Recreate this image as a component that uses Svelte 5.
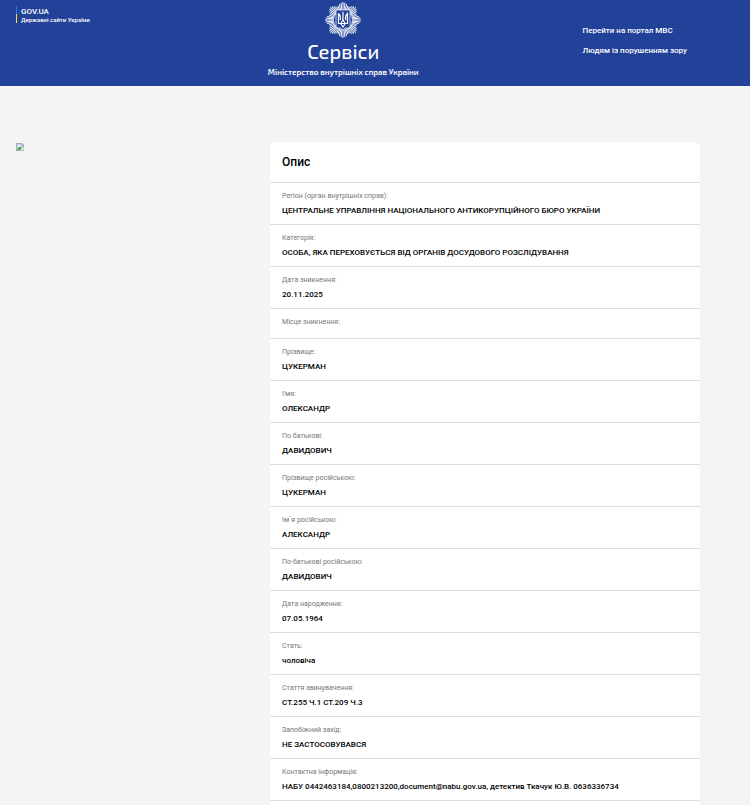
<script>
	const fields = [
		{ label: "Регіон (орган внутрішніх справ):", value: "ЦЕНТРАЛЬНЕ УПРАВЛІННЯ НАЦІОНАЛЬНОГО АНТИКОРУПЦІЙНОГО БЮРО УКРАЇНИ" },
		{ label: "Категорія:", value: "ОСОБА, ЯКА ПЕРЕХОВУЄТЬСЯ ВІД ОРГАНІВ ДОСУДОВОГО РОЗСЛІДУВАННЯ" },
		{ label: "Дата зникнення:", value: "20.11.2025" },
		{ label: "Місце зникнення:", value: "" },
		{ label: "Прізвище:", value: "ЦУКЕРМАН" },
		{ label: "І'мя:", value: "ОЛЕКСАНДР" },
		{ label: "По батькові:", value: "ДАВИДОВИЧ" },
		{ label: "Прізвище російською:", value: "ЦУКЕРМАН" },
		{ label: "Ім`я російською:", value: "АЛЕКСАНДР" },
		{ label: "По-батькові російською:", value: "ДАВИДОВИЧ" },
		{ label: "Дата народження:", value: "07.05.1964" },
		{ label: "Стать:", value: "чоловіча" },
		{ label: "Стаття звинувачення:", value: "СТ.255 Ч.1 СТ.209 Ч.3" },
		{ label: "Запобіжний захід:", value: "НЕ ЗАСТОСОВУВАВСЯ" },
		{ label: "Контактна інформація:", value: "НАБУ 0442463184,0800213200,document@nabu.gov.ua, детектив Ткачук Ю.В. 0636336734" }
	];

	// the star: eight beams of seven rays, the middle ray is the longest
	const lengths = [18, 17.4, 16.2, 14.8, 14.8, 16.2, 17.4];
	const rays = Array.from({ length: 56 }, (_, i) => ({
		angle: (i * 360) / 56,
		end: 18 - lengths[i % 7]
	}));
</script>

<div class="page">
	<header class="header">
		<a class="gov" href="#gov">
			<span class="flag"></span>
			<span class="gov-text">
				<span class="gov-name">GOV.UA</span>
				<span class="gov-note">Державні сайти України</span>
			</span>
		</a>

		<a class="brand" href="#home">
			<svg class="emblem" viewBox="0 0 36 36" aria-hidden="true">
				{#each rays as ray}
					<path
						d="M17.6 9 L17.5 {ray.end} H18.5 L18.4 9 Z"
						fill="#fff"
						transform="rotate({ray.angle} 18 18)"
					/>
				{/each}
				<path
					d="M11 8h14v16q0 2-2.4 2h-2.4L18 28l-2.2-2h-2.4Q11 26 11 24z"
					fill="#224199"
					stroke="#fff"
					stroke-width="0.7"
				/>
				<path
					d="M13.5 11.5v10h9v-10c-1.8 1.5-2.2 3.8-1.8 6.5M13.5 11.5c1.8 1.5 2.2 3.8 1.8 6.5M18 10v9"
					fill="none"
					stroke="#fff"
					stroke-width="1.2"
				/>
				<path
					d="M18 18l-2.2 3.5L18 25l2.2-3.5z"
					fill="none"
					stroke="#fff"
					stroke-width="1.1"
				/>
			</svg>
			<span class="brand-title">Сервіси</span>
			<span class="brand-note">Міністерство внутрішніх справ України</span>
		</a>

		<nav class="links">
			<a href="#portal">Перейти на портал МВС</a>
			<a href="#accessibility">Людям із порушенням зору</a>
		</nav>
	</header>

	<main class="content">
		<div class="photo">
			<svg class="broken" viewBox="0 0 8 8" role="img" aria-label="Фото">
				<path d="M0 0h6l2 2v6H0z" fill="#a9adb2" />
				<path d="M1 1h4.5v2H7v4H1z" fill="#c5d8f5" />
				<path d="M2 3.5q0-1 1-1t1.5 1z" fill="#fff" />
				<path d="M1 7q1-3 3-3 1.5 0 2 1L4 7z" fill="#54a536" />
				<path d="M7.5 4.5L4.5 7.5H6L8 6z" fill="#f3f3f3" />
			</svg>
		</div>

		<section class="card">
			<h1 class="card-title">Опис</h1>
			<dl class="fields">
				{#each fields as field}
					<div class="field">
						<dt>{field.label}</dt>
						<dd>{field.value}</dd>
					</div>
				{/each}
			</dl>
		</section>
	</main>
</div>

<style>
	:global(body) {
		margin: 0;
		background: #f4f4f4;
	}

	.page {
		display: flex;
		flex-direction: column;
		min-height: 100vh;
		font-family: Roboto, sans-serif;
		font-weight: 500;
		color: #000;
	}

	a {
		color: inherit;
		text-decoration: none;
	}

	.header {
		display: grid;
		grid-template-columns: 8fr auto 9fr;
		box-sizing: border-box;
		min-height: 86px;
		padding: 0 48px 0 16px;
		background: #224199;
		color: #fff;
	}

	.gov {
		display: flex;
		align-self: start;
		gap: 4px;
		margin-top: 6px;
	}

	.flag {
		width: 1px;
		height: 17px;
		background: linear-gradient(#2672e8 50%, #ffdd3c 50%);
	}

	.gov-text {
		display: flex;
		flex-direction: column;
		padding-top: 2px;
	}

	.gov-name {
		font-size: 8px;
		line-height: 8px;
	}

	.gov-note {
		font-size: 6px;
		line-height: 8px;
	}

	.brand {
		display: flex;
		flex-direction: column;
		align-items: center;
		padding-top: 2px;
	}

	.emblem {
		width: 36px;
		height: 36px;
	}

	.brand-title {
		font-family: "Exo 2", "Noto Sans", sans-serif;
		font-size: 20px;
		line-height: 27px;
	}

	.brand-note {
		font-family: "Exo 2", "Noto Sans", sans-serif;
		font-size: 8px;
		font-weight: 600;
		line-height: 14px;
	}

	.links {
		display: flex;
		flex-direction: column;
		gap: 8px;
		justify-self: end;
		padding: 25px 15px 0 0;
		font-size: 8px;
		line-height: 12px;
	}

	.content {
		display: grid;
		grid-template-columns: 13fr 22fr;
		flex: 1;
		padding: 56px 50px 0 16px;
	}

	.broken {
		display: block;
		width: 8px;
		height: 8px;
		margin-top: 1px;
	}

	.card {
		border-radius: 6px 6px 0 0;
		background: #fff;
	}

	.card-title {
		margin: 0;
		padding: 12px;
		font-size: 12px;
		font-weight: 500;
		line-height: 16px;
	}

	.fields {
		margin: 0;
		border-bottom: 1px solid #dcdcdc;
	}

	.field {
		padding: 8px 12px 7px;
		border-top: 1px solid #dcdcdc;
	}

	dt {
		margin-bottom: 4px;
		font-size: 7px;
		font-weight: 400;
		line-height: 10px;
		color: #73777b;
	}

	dd {
		margin: 0;
		font-size: 8px;
		line-height: 12px;
	}
</style>
